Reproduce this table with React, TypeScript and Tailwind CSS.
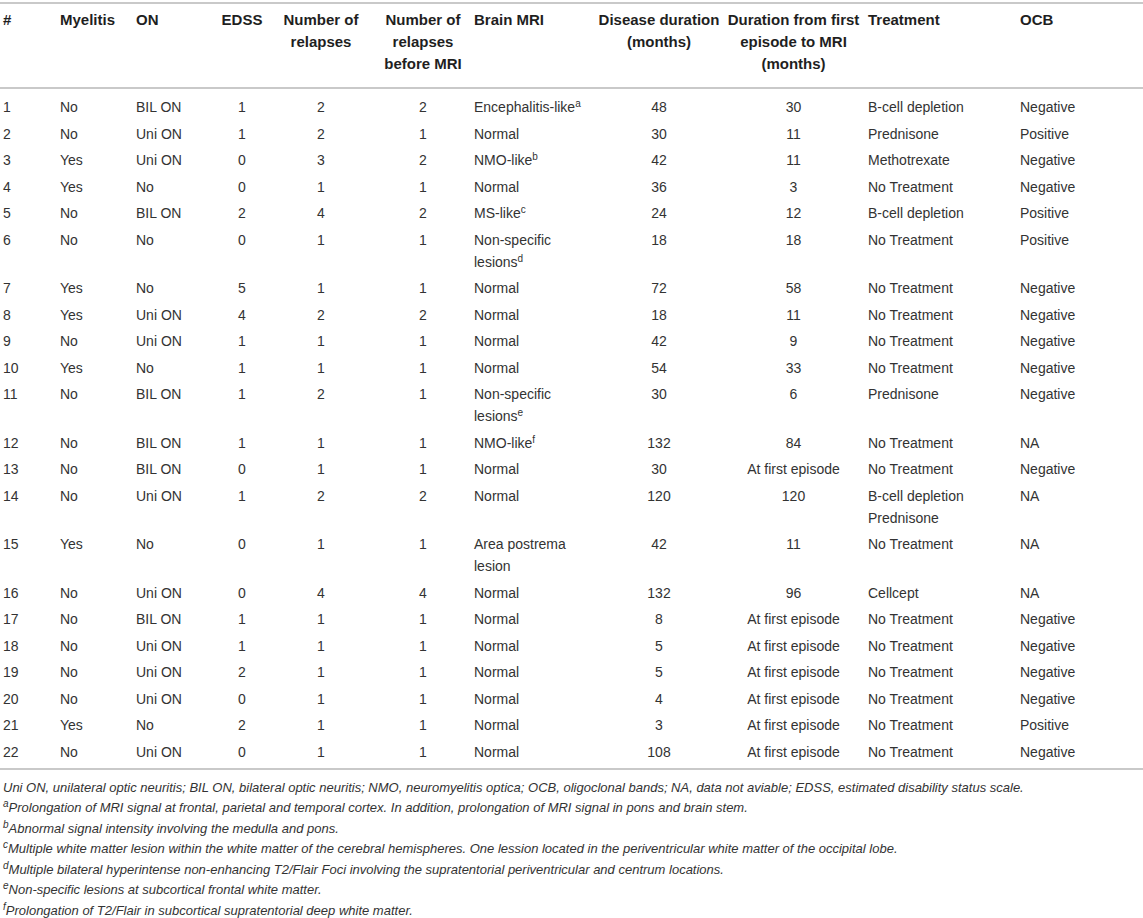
import type { ReactNode } from "react";

type Row = {
  n: string;
  myelitis: string;
  on: string;
  edss: string;
  relapses: string;
  before: string;
  mri: ReactNode;
  duration: string;
  toMri: string;
  treatment: ReactNode;
  ocb: string;
};

function Sup({ children }: { children: ReactNode }) {
  return <sup className="text-[10px]">{children}</sup>;
}

function mri(text: string, note?: string) {
  return (
    <>
      {text}
      {note && <Sup>{note}</Sup>}
    </>
  );
}

function lesions(note: string) {
  return (
    <>
      Non-specific
      <br />
      lesions<Sup>{note}</Sup>
    </>
  );
}

const r = (
  n: string,
  myelitis: string,
  on: string,
  edss: string,
  relapses: string,
  before: string,
  m: ReactNode,
  duration: string,
  toMri: string,
  treatment: ReactNode,
  ocb: string
): Row => ({ n, myelitis, on, edss, relapses, before, mri: m, duration, toMri, treatment, ocb });

const FIRST = "At first episode";
const NT = "No Treatment";

const rows: Row[] = [
  r("1", "No", "BIL ON", "1", "2", "2", mri("Encephalitis-like", "a"), "48", "30", "B-cell depletion", "Negative"),
  r("2", "No", "Uni ON", "1", "2", "1", "Normal", "30", "11", "Prednisone", "Positive"),
  r("3", "Yes", "Uni ON", "0", "3", "2", mri("NMO-like", "b"), "42", "11", "Methotrexate", "Negative"),
  r("4", "Yes", "No", "0", "1", "1", "Normal", "36", "3", NT, "Negative"),
  r("5", "No", "BIL ON", "2", "4", "2", mri("MS-like", "c"), "24", "12", "B-cell depletion", "Positive"),
  r("6", "No", "No", "0", "1", "1", lesions("d"), "18", "18", NT, "Positive"),
  r("7", "Yes", "No", "5", "1", "1", "Normal", "72", "58", NT, "Negative"),
  r("8", "Yes", "Uni ON", "4", "2", "2", "Normal", "18", "11", NT, "Negative"),
  r("9", "No", "Uni ON", "1", "1", "1", "Normal", "42", "9", NT, "Negative"),
  r("10", "Yes", "No", "1", "1", "1", "Normal", "54", "33", NT, "Negative"),
  r("11", "No", "BIL ON", "1", "2", "1", lesions("e"), "30", "6", "Prednisone", "Negative"),
  r("12", "No", "BIL ON", "1", "1", "1", mri("NMO-like", "f"), "132", "84", NT, "NA"),
  r("13", "No", "BIL ON", "0", "1", "1", "Normal", "30", FIRST, NT, "Negative"),
  r(
    "14", "No", "Uni ON", "1", "2", "2", "Normal", "120", "120",
    <>
      B-cell depletion
      <br />
      Prednisone
    </>,
    "NA"
  ),
  r(
    "15", "Yes", "No", "0", "1", "1",
    <>
      Area postrema
      <br />
      lesion
    </>,
    "42", "11", NT, "NA"
  ),
  r("16", "No", "Uni ON", "0", "4", "4", "Normal", "132", "96", "Cellcept", "NA"),
  r("17", "No", "BIL ON", "1", "1", "1", "Normal", "8", FIRST, NT, "Negative"),
  r("18", "No", "Uni ON", "1", "1", "1", "Normal", "5", FIRST, NT, "Negative"),
  r("19", "No", "Uni ON", "2", "1", "1", "Normal", "5", FIRST, NT, "Negative"),
  r("20", "No", "Uni ON", "0", "1", "1", "Normal", "4", FIRST, NT, "Negative"),
  r("21", "Yes", "No", "2", "1", "1", "Normal", "3", FIRST, NT, "Positive"),
  r("22", "No", "Uni ON", "0", "1", "1", "Normal", "108", FIRST, NT, "Negative"),
];

// column widths in px, summing to the page width
const widths = [57, 76, 84, 50, 108, 96, 125, 126, 143, 152, 126];

const notes: [string, string][] = [
  ["a", "Prolongation of MRI signal at frontal, parietal and temporal cortex. In addition, prolongation of MRI signal in pons and brain stem."],
  ["b", "Abnormal signal intensity involving the medulla and pons."],
  ["c", "Multiple white matter lesion within the white matter of the cerebral hemispheres. One lession located in the periventricular white matter of the occipital lobe."],
  ["d", "Multiple bilateral hyperintense non-enhancing T2/Flair Foci involving the supratentorial periventricular and centrum locations."],
  ["e", "Non-specific lesions at subcortical frontal white matter."],
  ["f", "Prolongation of T2/Flair in subcortical supratentorial deep white matter."],
];

export default function App() {
  const th =
    "border-y-2 border-[#c9c9c9] pt-[5px] pb-[12px] align-top whitespace-nowrap font-bold text-[15px] leading-[22px] text-[#1f1f1f]";
  const left = "pl-[3px] text-left";
  const center = "text-center";

  return (
    <div className="w-[1143px] h-[918px] bg-white text-[#333] font-['Liberation_Sans',Arial,sans-serif]">
      <div className="pt-[2px]">
        <table className="w-[1143px] table-fixed border-collapse">
          <colgroup>
            {widths.map((w, i) => (
              <col key={i} style={{ width: w }} />
            ))}
          </colgroup>
          <thead>
            <tr>
              <th className={`${th} ${left}`}>#</th>
              <th className={`${th} ${left}`}>Myelitis</th>
              <th className={`${th} ${left}`}>ON</th>
              <th className={`${th} ${center}`}>EDSS</th>
              <th className={`${th} ${center}`}>
                Number of
                <br />
                relapses
              </th>
              <th className={`${th} ${center}`}>
                Number of
                <br />
                relapses
                <br />
                before MRI
              </th>
              <th className={`${th} ${left}`}>Brain MRI</th>
              <th className={`${th} ${center}`}>
                Disease duration
                <br />
                (months)
              </th>
              <th className={`${th} ${center}`}>
                Duration from first
                <br />
                episode to MRI
                <br />
                (months)
              </th>
              <th className={`${th} ${left}`}>Treatment</th>
              <th className={`${th} ${left}`}>OCB</th>
            </tr>
          </thead>
          <tbody className="text-[14px] leading-[22px]">
            {rows.map((row, i) => {
              const pad = `align-top ${i === 0 ? "pt-[7px]" : "pt-[2px]"} ${i === rows.length - 1 ? "pb-[5px]" : "pb-[2.5px]"}`;
              return (
                <tr key={row.n}>
                  <td className={`${pad} ${left}`}>{row.n}</td>
                  <td className={`${pad} ${left}`}>{row.myelitis}</td>
                  <td className={`${pad} ${left}`}>{row.on}</td>
                  <td className={`${pad} ${center}`}>{row.edss}</td>
                  <td className={`${pad} ${center}`}>{row.relapses}</td>
                  <td className={`${pad} ${center}`}>{row.before}</td>
                  <td className={`${pad} ${left}`}>{row.mri}</td>
                  <td className={`${pad} ${center}`}>{row.duration}</td>
                  <td className={`${pad} ${center}`}>{row.toMri}</td>
                  <td className={`${pad} ${left}`}>{row.treatment}</td>
                  <td className={`${pad} ${left}`}>{row.ocb}</td>
                </tr>
              );
            })}
          </tbody>
        </table>
        <div className="border-t-2 border-[#c9c9c9] pt-[8px] pl-[3px] text-[13px] leading-[20.5px] italic text-[#333]">
          <div>
            Uni ON, unilateral optic neuritis; BIL ON, bilateral optic neuritis; NMO, neuromyelitis optica; OCB, oligoclonal
            bands; NA, data not aviable; EDSS, estimated disability status scale.
          </div>
          {notes.map(([k, t]) => (
            <div key={k}>
              <sup className="text-[10px]">{k}</sup>
              {t}
            </div>
          ))}
        </div>
      </div>
    </div>
  );
}
